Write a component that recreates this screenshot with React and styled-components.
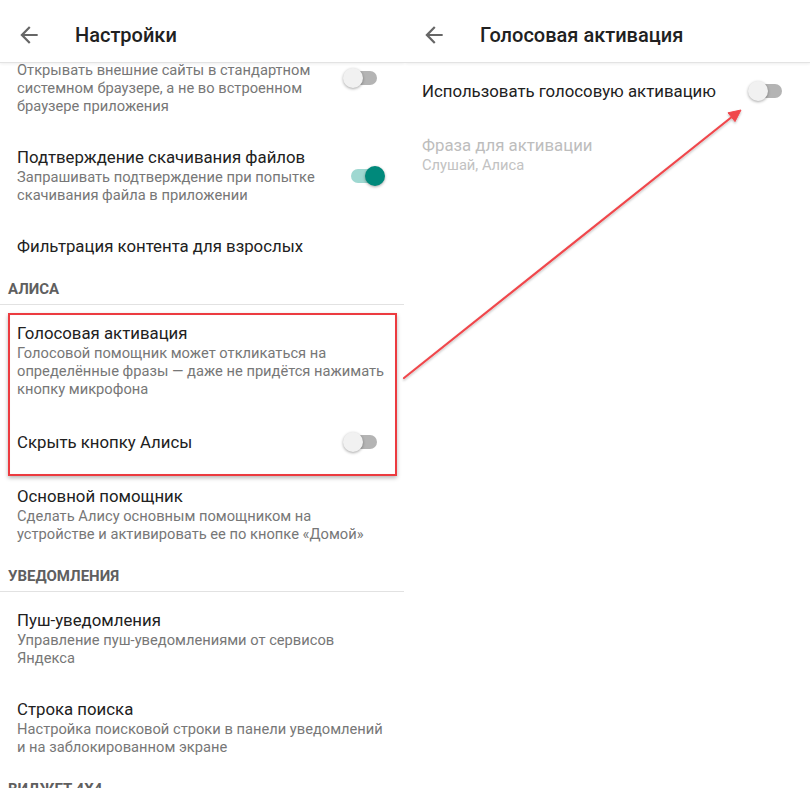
import React, { useLayoutEffect, useRef } from 'react';
import styled, { createGlobalStyle } from 'styled-components';

const Global = createGlobalStyle`
  html, body { margin: 0; padding: 0; background: #fff; }
  body { font-family: Roboto, "Noto Sans", "Liberation Sans", sans-serif; }
  * { box-sizing: border-box; }
`;

const Page = styled.div`
  position: relative;
  width: 810px;
  height: 788px;
  overflow: hidden;
  display: grid;
  grid-template-columns: 405px 405px;
  background: #fff;
`;

const Panel = styled.section`
  display: flex;
  flex-direction: column;
  height: 788px;
  min-width: 0;
  overflow: hidden;
`;

const Header = styled.header`
  flex: none;
  position: relative;
  z-index: 2;
  height: 63px;
  display: flex;
  align-items: center;
  padding: 8px 0 0 16px;
  background: #fff;
  border-bottom: 1px solid #e3e3e3;
  box-shadow: 0 1px 3px rgba(0, 0, 0, 0.07);
`;

const BackIcon = styled.svg`
  flex: none;
  width: 26px;
  height: 26px;
  fill: #666;
`;

const HeaderTitle = styled.h1`
  margin: 0 0 0 33px;
  font-size: 20px;
  font-weight: 500;
  color: #212121;
`;

const Viewport = styled.div`
  flex: 1;
  min-height: 0;
  overflow-y: auto;
  scrollbar-width: none;
  &::-webkit-scrollbar { display: none; }
`;

const List = styled.div`
  display: flex;
  flex-direction: column;
  padding-bottom: 40px;
`;

const Row = styled.div`
  display: flex;
  align-items: center;
  gap: 16px;
  padding: 16px 20px 16px 17px;
`;

const TextCol = styled.div`
  flex: 1;
  min-width: 0;
`;

const Title = styled.div`
  font-size: 16.8px;
  line-height: 20px;
  color: ${(p) => (p.$disabled ? '#bdbdbd' : '#212121')};
  white-space: nowrap;
`;

const Sub = styled.div`
  margin-top: 1px;
  font-size: 14.7px;
  line-height: 18px;
  color: ${(p) => (p.$disabled ? '#c2c2c2' : '#777')};
  white-space: nowrap;
`;

const SectionHeader = styled.div`
  padding: 8px 8px 6px;
  font-size: 15px;
  line-height: 18px;
  font-weight: 700;
  color: #5f5f5f;
  border-bottom: 1px solid #e2e2e2;
  margin-bottom: 2px;
  margin-right: 1px;
`;

const Highlight = styled.div`
  position: relative;
  display: flex;
  flex-direction: column;
  &::after {
    content: '';
    position: absolute;
    top: 6px;
    bottom: -6px;
    left: 8px;
    width: 385px;
    border: 2px solid #ec3b40;
    box-shadow: 0 2px 4px rgba(0, 0, 0, 0.28), inset 0 0 1px rgba(0, 0, 0, 0.1);
    pointer-events: none;
  }
`;

const SwitchBox = styled.div`
  flex: none;
  position: relative;
  width: 42px;
  height: 24px;
`;

const Track = styled.div`
  position: absolute;
  left: 8px;
  right: 8px;
  top: 5px;
  height: 14px;
  border-radius: 7px;
  background: ${(p) => (p.$on ? '#9fd8d1' : '#b4b4b4')};
`;

const Thumb = styled.div`
  position: absolute;
  top: 2px;
  ${(p) => (p.$on ? 'right: 0;' : 'left: 0;')}
  width: 20px;
  height: 20px;
  border-radius: 50%;
  background: ${(p) => (p.$on ? '#00897b' : '#f1f1f1')};
  box-shadow: 0 1px 3px rgba(0, 0, 0, 0.35);
`;

const Overlay = styled.svg`
  position: absolute;
  left: 0;
  top: 0;
  width: 810px;
  height: 788px;
  pointer-events: none;
  z-index: 5;
`;

const Back = () => (
  <BackIcon viewBox="0 0 24 24">
    <path d="M20 11H7.83l5.59-5.59L12 4l-8 8 8 8 1.41-1.41L7.83 13H20v-2z" />
  </BackIcon>
);

const Switch = ({ on }) => (
  <SwitchBox>
    <Track $on={on} />
    <Thumb $on={on} />
  </SwitchBox>
);

const Lines = ({ lines }) =>
  lines.map((l, i) => (
    <React.Fragment key={i}>
      {i > 0 && <br />}
      {l}
    </React.Fragment>
  ));

const Pref = ({ title, sub, toggle, disabled }) => (
  <Row>
    <TextCol>
      <Title $disabled={disabled}>{title}</Title>
      {sub && (
        <Sub $disabled={disabled}>
          <Lines lines={sub} />
        </Sub>
      )}
    </TextCol>
    {toggle !== undefined && <Switch on={toggle} />}
  </Row>
);

const ScrolledList = ({ scrollTop = 0, children }) => {
  const ref = useRef(null);
  useLayoutEffect(() => {
    if (ref.current) ref.current.scrollTop = scrollTop;
  }, [scrollTop]);
  return (
    <Viewport ref={ref}>
      <List>{children}</List>
    </Viewport>
  );
};

export default function App() {
  return (
    <Page>
      <Global />
      <Panel>
        <Header>
          <Back />
          <HeaderTitle>Настройки</HeaderTitle>
        </Header>
        <ScrolledList scrollTop={39}>
          <Pref
            title="Открывать сайты в браузере"
            sub={[
              'Открывать внешние сайты в стандартном',
              'системном браузере, а не во встроенном',
              'браузере приложения',
            ]}
            toggle={false}
          />
          <Pref
            title="Подтверждение скачивания файлов"
            sub={['Запрашивать подтверждение при попытке', 'скачивания файла в приложении']}
            toggle={true}
          />
          <Pref title="Фильтрация контента для взрослых" />
          <SectionHeader>АЛИСА</SectionHeader>
          <Highlight>
            <Pref
              title="Голосовая активация"
              sub={[
                'Голосовой помощник может откликаться на',
                'определённые фразы — даже не придётся нажимать',
                'кнопку микрофона',
              ]}
            />
            <Pref title="Скрыть кнопку Алисы" toggle={false} />
          </Highlight>
          <Pref
            title="Основной помощник"
            sub={['Сделать Алису основным помощником на', 'устройстве и активировать ее по кнопке «Домой»']}
          />
          <SectionHeader>УВЕДОМЛЕНИЯ</SectionHeader>
          <Pref
            title="Пуш-уведомления"
            sub={['Управление пуш-уведомлениями от сервисов', 'Яндекса']}
          />
          <Pref
            title="Строка поиска"
            sub={['Настройка поисковой строки в панели уведомлений', 'и на заблокированном экране']}
          />
          <SectionHeader>ВИДЖЕТ 4X4</SectionHeader>
        </ScrolledList>
      </Panel>
      <Panel>
        <Header>
          <Back />
          <HeaderTitle>Голосовая активация</HeaderTitle>
        </Header>
        <ScrolledList>
          <Pref title="Использовать голосовую активацию" toggle={false} />
          <Pref title="Фраза для активации" sub={['Слушай, Алиса']} disabled />
        </ScrolledList>
      </Panel>
      <Overlay viewBox="0 0 810 788">
        <defs>
          <filter id="arrowShadow" x="-10%" y="-10%" width="120%" height="120%">
            <feDropShadow dx="0" dy="1.5" stdDeviation="1" floodColor="#000" floodOpacity="0.25" />
          </filter>
        </defs>
        <g filter="url(#arrowShadow)" fill="#f0474c" stroke="#f0474c">
          <line x1="404" y1="378" x2="733" y2="116" strokeWidth="2.2" strokeLinecap="round" />
          <polygon points="741,110 735,121.6 728,112.8" strokeWidth="1" strokeLinejoin="round" />
        </g>
      </Overlay>
    </Page>
  );
}
